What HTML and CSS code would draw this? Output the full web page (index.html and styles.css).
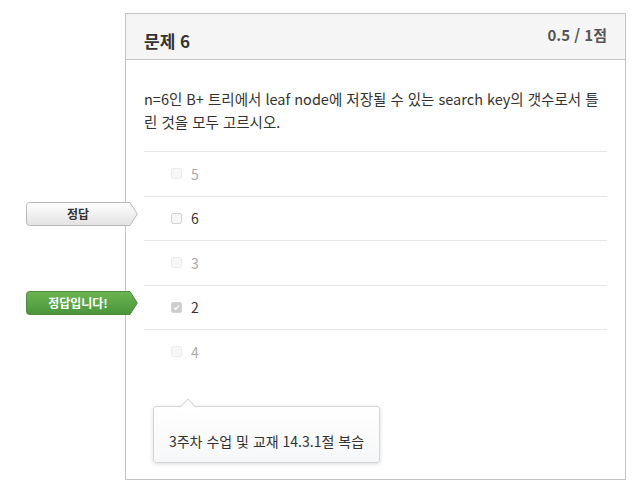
FILE: index.html
```html
<!DOCTYPE html>
<html lang="ko">
<head>
  <meta charset="UTF-8">
  <meta name="viewport" content="width=device-width, initial-scale=1.0">
  <title>문제 6</title>
  <link rel="stylesheet" href="styles.css">
</head>
<body>
  <div class="page">
    <div class="card">
      <div class="card-head">
        <h2 class="q-title">문제 6</h2>
        <span class="q-score">0.5 / 1점</span>
      </div>
      <div class="card-body">
        <p class="q-text">n=6인 B+ 트리에서 leaf node에 저장될 수 있는 search key의 갯수로서 틀린 것을 모두 고르시오.</p>
        <ul class="answers">
          <li class="answer">
            <span class="box"></span><span class="ans-label">5</span>
          </li>
          <li class="answer active">
            <div class="tag tag-gray">
              <svg viewBox="0 0 112 24" preserveAspectRatio="none">
                <defs>
                  <linearGradient id="gGray" x1="0" y1="0" x2="0" y2="1">
                    <stop offset="0" stop-color="#ffffff"/>
                    <stop offset="1" stop-color="#e2e2e2"/>
                  </linearGradient>
                </defs>
                <path d="M3.5 0.5 H104 L111.3 12 L104 23.5 H3.5 Q0.5 23.5 0.5 20.5 V3.5 Q0.5 0.5 3.5 0.5 Z" fill="url(#gGray)" stroke="#b9b9b9"/>
              </svg>
              <span class="tag-text">정답</span>
            </div>
            <span class="box"></span><span class="ans-label">6</span>
          </li>
          <li class="answer">
            <span class="box"></span><span class="ans-label">3</span>
          </li>
          <li class="answer active">
            <div class="tag tag-green">
              <svg viewBox="0 0 112 24" preserveAspectRatio="none">
                <defs>
                  <linearGradient id="gGreen" x1="0" y1="0" x2="0" y2="1">
                    <stop offset="0" stop-color="#6cb553"/>
                    <stop offset="1" stop-color="#4a953a"/>
                  </linearGradient>
                </defs>
                <path d="M3.5 0.5 H104 L111.3 12 L104 23.5 H3.5 Q0.5 23.5 0.5 20.5 V3.5 Q0.5 0.5 3.5 0.5 Z" fill="url(#gGreen)" stroke="#4c8c3c"/>
              </svg>
              <span class="tag-text">정답입니다!</span>
            </div>
            <span class="box checked">
              <svg viewBox="0 0 11 11"><path d="M2.5 5.8 L4.6 7.8 L8.6 3.2" fill="none" stroke="#fff" stroke-width="1.6"/></svg>
            </span><span class="ans-label">2</span>
          </li>
          <li class="answer">
            <span class="box"></span><span class="ans-label">4</span>
          </li>
        </ul>
        <div class="tooltip">3주차 수업 및 교재 14.3.1절 복습</div>
      </div>
    </div>
  </div>
</body>
</html>
```

FILE: styles.css
```css
body {
  margin: 0;
  background: #fff;
  font-family: "Noto Sans CJK KR", "Noto Sans", sans-serif;
  color: #333;
}
.page {
  padding: 13px 0 0 125px;
}
.card {
  width: 501px;
  box-sizing: border-box;
  border: 1px solid #c4c4c4;
  padding-bottom: 16px;
}
.card-head {
  height: 46px;
  box-sizing: border-box;
  padding: 11px 18px 0;
  background: #f5f5f5;
  border-bottom: 1px solid #c4c4c4;
  display: flex;
  justify-content: space-between;
  align-items: flex-start;
}
.q-title {
  margin: 4px 0 0;
  font-size: 17px;
  line-height: 24px;
  font-weight: bold;
  color: #333;
}
.q-score {
  font-size: 15px;
  line-height: 20px;
  font-weight: bold;
  color: #555;
}
.card-body {
  padding: 27px 18px 0;
}
.q-text {
  margin: 0 0 18px;
  font-size: 14.5px;
  line-height: 23px;
  word-break: break-all;
  color: #333;
}
.answers {
  list-style: none;
  margin: 0;
  padding: 0;
}
.answer {
  position: relative;
  height: 44.5px;
  box-sizing: border-box;
  border-top: 1px solid #e6e6e6;
  display: flex;
  align-items: center;
  padding-left: 27px;
  font-size: 14px;
  color: #aaa;
}
.answer.active {
  color: #333;
}
.box {
  width: 11px;
  height: 11px;
  box-sizing: border-box;
  border: 1px solid #ececec;
  border-radius: 2px;
  background: #f7f7f7;
  margin-right: 9px;
  display: flex;
}
.answer.active .box {
  border-color: #d4d4d4;
}
.box.checked {
  background: #cdcdcd;
  border-color: #c4c4c4;
}
.box svg {
  width: 100%;
  height: 100%;
}
.ans-label {
  line-height: 20px;
}
.tag {
  position: absolute;
  left: -118px;
  top: 5px;
  width: 112px;
  height: 24px;
}
.tag svg {
  position: absolute;
  left: 0;
  top: 0;
  width: 112px;
  height: 24px;
}
.tag-text {
  position: relative;
  display: block;
  width: 104px;
  text-align: center;
  font-size: 12px;
  line-height: 24px;
  font-weight: bold;
}
.tag-gray .tag-text {
  color: #333;
}
.tag-green .tag-text {
  color: #fff;
}
.tooltip {
  position: relative;
  margin: 32px 0 0 9px;
  width: 227px;
  height: 57px;
  box-sizing: border-box;
  padding-top: 24px;
  text-align: center;
  font-size: 14px;
  line-height: 20px;
  color: #333;
  background: linear-gradient(#fff, #f6f7f8);
  border: 1px solid #d6d6d6;
  border-radius: 3px;
  box-shadow: 0 1px 4px rgba(0, 0, 0, 0.15);
}
.tooltip::before {
  content: "";
  position: absolute;
  left: 28px;
  top: -6px;
  width: 11px;
  height: 11px;
  background: #fff;
  border-top: 1px solid #d6d6d6;
  border-left: 1px solid #d6d6d6;
  transform: rotate(45deg);
}
```
